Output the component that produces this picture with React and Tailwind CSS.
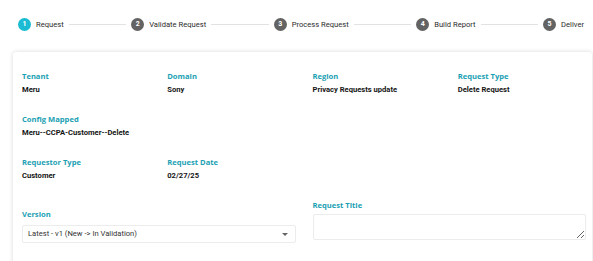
import { Fragment } from 'react';

export default function App() {
  const steps = ['Request', 'Validate Request', 'Process Request', 'Build Report', 'Deliver'];

  const fields = [
    { label: 'Tenant', value: 'Meru' },
    { label: 'Domain', value: 'Sony' },
    { label: 'Region', value: 'Privacy Requests update' },
    { label: 'Request Type', value: 'Delete Request' },
    { label: 'Config Mapped', value: 'Meru--CCPA-Customer--Delete', span: true },
    { label: 'Requestor Type', value: 'Customer' },
    { label: 'Request Date', value: '02/27/25' },
  ];

  const labelCls = "text-[7.6px] leading-[10px] font-bold text-[#1aa0b3] font-['Open_Sans',sans-serif] whitespace-nowrap";
  const valueCls = "text-[7.6px] leading-[10px] font-bold text-[#151515] font-['Roboto',sans-serif] whitespace-nowrap";

  return (
    <div className="w-[593px] h-[261px] bg-white overflow-hidden font-['Roboto',sans-serif]">
      {/* Stepper */}
      <div className="flex items-center pl-[18px] pr-[9px] pt-[18px] h-[31px]">
        {steps.map((s, i) => (
          <Fragment key={s}>
            <div className="flex items-center">
              <div
                className={`w-[13px] h-[13px] rounded-full flex items-center justify-center text-white text-[7px] font-bold leading-none ${
                  i === 0 ? 'bg-[#1bbcd3]' : 'bg-[#636363]'
                }`}
              >
                {i + 1}
              </div>
              <span className="ml-[5px] text-[7.6px] text-[#2c2c2c] whitespace-nowrap leading-[13px]">{s}</span>
            </div>
            {i < steps.length - 1 && <div className="flex-1 mx-[5px] h-px bg-[#e2e2e2]" />}
          </Fragment>
        ))}
      </div>

      {/* Card */}
      <div className="mt-[21px] ml-[13px] mr-[1px] rounded-[3px] bg-white shadow-[0_0_4px_rgba(0,0,0,0.16)] pt-[19px] pl-[9px] pr-[6px] pb-[30px]">
        <div className="grid grid-cols-4 gap-x-[17px] gap-y-[19px]">
          {fields.map((f) => (
            <div key={f.label} className={f.span ? 'col-span-4' : ''}>
              <div className={labelCls}>{f.label}</div>
              <div className={`${valueCls} mt-[4px]`}>{f.value}</div>
            </div>
          ))}
        </div>

        <div className="grid grid-cols-2 gap-x-[17px] mt-[19px]">
          <div className="mt-[9px]">
            <div className={labelCls}>Version</div>
            <div className="mt-[6px] h-[18px] border border-[#ececec] rounded-[2px] flex items-center justify-between pl-[5px] pr-[7px]">
              <span className="text-[7.6px] text-[#333] font-['Roboto',sans-serif] whitespace-nowrap">
                Latest - v1 (New -&gt; In Validation)
              </span>
              <span className="w-0 h-0 border-l-[3px] border-r-[3px] border-t-[3px] border-l-transparent border-r-transparent border-t-[#666]" />
            </div>
          </div>
          <div>
            <div className={labelCls}>Request Title</div>
            <textarea
              className="mt-[4px] block w-full h-[26px] border border-[#ececec] rounded-[2px] outline-none"
              defaultValue=""
            />
          </div>
        </div>
      </div>
    </div>
  );
}
